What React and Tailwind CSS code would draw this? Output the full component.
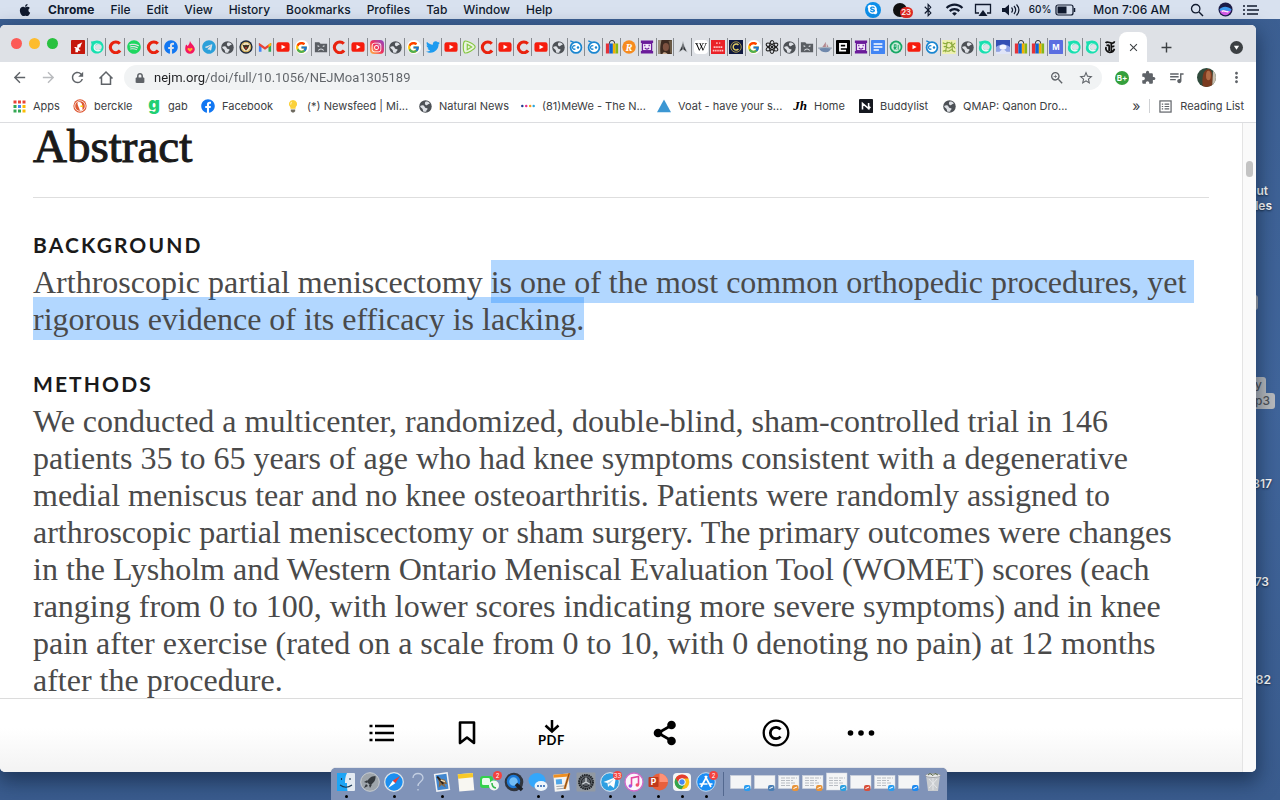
import React from 'react';
import {
  FaApple, FaSkype, FaBluetoothB, FaSpotify, FaFacebook, FaTelegram, FaInstagram,
  FaTwitter, FaWikipediaW, FaLock,
} from 'react-icons/fa';
import { FcGoogle } from 'react-icons/fc';
import {
  MdArrowBack, MdArrowForward, MdRefresh, MdExtension, MdQueueMusic, MdMoreVert,
  MdStarBorder, MdZoomIn, MdWifi, MdClose, MdAdd,
} from 'react-icons/md';

/* ---------- favicons ---------- */

const Svg = ({ children, box = 16, className = 'size-[14px]' }) => (
  <svg viewBox={`0 0 ${box} ${box}`} className={className} aria-hidden="true">{children}</svg>
);

const Globe = () => (
  <Svg className="size-[13px]">
    <circle cx="8" cy="8" r="7.700" fill="#4d5156" />
    <path d="M1.500 7.500C4 5.500 6.500 6.500 7 8.500c.4 1.500 3 .8 3.500 2 .5 1.400-1.500 1.500-1.500 3.500-1.500.7-3 .5-4-.3C5 12 4.500 11 3.500 10.200c-1-.8-2-1.200-2-2.700z" fill="#dee1e6" />
    <path d="M8 2c1.500-.6 4 .2 5.300 2-.6 1-2 .8-2.500 1.600C10.300 6.500 9 6.600 8.200 6 7 5.200 7 3 8 2z" fill="#dee1e6" />
  </Svg>
);
const RedC = () => (
  <Svg><path d="M13.600 3.400A7 7 0 1 0 14 12.200" transform="translate(1.500 1.300) scale(.88)" fill="none" stroke="#e8230f" strokeWidth="4" /></Svg>
);
const YouTube = () => (
  <Svg>
    <rect x="0.500" y="2.500" width="15" height="11" rx="2.500" fill="#f61c0d" />
    <path d="M6.300 5.300v5.400L11 8z" fill="#fff" />
  </Svg>
);
const Google = () => (
  <span className="flex size-[14px] items-center justify-center rounded-full bg-white">
    <FcGoogle className="size-[13px]" />
  </span>
);
const Teal = () => (
  <Svg>
    <path d="M1 1.500c2 .8 4-.8 7-.8 4.500 0 7.500 3.200 7.500 7.300 0 4.500-3.500 7.500-7.500 7.500C4 15.500 1 12.800 1 9.300 1 7 2 6 1.700 4.500z" fill="#18e0b0" />
    <path d="M13 4.500C9.500 2.500 5.500 4.500 5.500 8c0 3 3.500 4.800 7.500 2.500-.8 2-3 3-5 2.500C5 12.500 3.800 10 4 8c.3-4 5-6 9-3.500z" fill="#eafaf6" />
    <path d="M6.500 5.500c3-2 7-.5 7 2.500s-3 4-6 3C5 10 5 7 6.500 5.500z" fill="#dee1e6" />
  </Svg>
);
const SadFolder = () => (
  <Svg>
    <path d="M1 2.500h5l1.500 1.700H15V14H1z" fill="#5a5e63" />
    <path d="M4 6.500l2 1M12 6.500l-2 1M5 12c1.500-2.400 4.500-2.400 6 0" fill="none" stroke="#dee1e6" strokeWidth="1.200" />
  </Svg>
);
const Bag = () => (
  <Svg>
    <path d="M5 5V3.500a3 3 0 0 1 6 0V5" fill="none" stroke="#333" strokeWidth="1.100" />
    <path d="M1 4h4v11.500H1z" fill="#e53238" />
    <path d="M5 4h4v11.500H5z" fill="#0f64d2" />
    <path d="M9 4h3v11.500H9z" fill="#f5af02" />
    <path d="M12 4h3v11.500h-3z" fill="#86b817" />
  </Svg>
);
const Purple = () => (
  <Svg>
    <path d="M1 .5h14v3h-1v9h1v3H1v-3h1v-9H1z" fill="#6a1b9a" />
    <rect x="3.500" y="4.500" width="9" height="7" fill="#f3e8fa" />
    <path d="M5.500 5.500v1.700M10.500 5.500v1.700M5.500 9c1.500 1.800 3.500 1.800 5 0" fill="none" stroke="#6a1b9a" strokeWidth="1.300" />
  </Svg>
);
const BlueRing = () => (
  <Svg>
    <circle cx="8" cy="8.500" r="6.200" fill="#fff" stroke="#1a86d0" strokeWidth="2" />
    <path d="M1.500 1l4.500 2M7.300 7a2 2 0 1 0 0 3" fill="none" stroke="#1a86d0" strokeWidth="1.500" />
    <circle cx="10.300" cy="8.500" r="1.400" fill="#1a86d0" />
  </Svg>
);
const Flipboard = () => (
  <Svg>
    <rect width="16" height="16" rx="1" fill="#c5170c" />
    <path d="M5 14V9h2l.3-3.500L13 2.500l-1.500 3-1 3H9v2l2 1-1 .8H8V14z" fill="#fff" />
    <path d="M4 8.500h2.500" stroke="#fff" strokeWidth="1.200" />
  </Svg>
);
const Flame = () => (
  <Svg>
    <path d="M8 .5C8 4 13.500 6 13.500 10.500A5.400 5.400 0 0 1 8 15.700a5.400 5.400 0 0 1-5.500-5.200C2.500 8 3 6.500 3.500 5c1 .5 1.500 1.200 1.800 2C7 5 8 3 8 .5z" fill="#f5175f" />
    <path d="M8 13.500l-2.800-2.700C4.500 9 7 8.300 8 10c1-1.700 3.500-1 2.800.8z" fill="#ffb02e" />
  </Svg>
);
const Seal = () => (
  <Svg>
    <circle cx="8" cy="8" r="7.600" fill="#1f2a3c" />
    <circle cx="8" cy="8" r="5.400" fill="#f0e3c0" stroke="#d8b35a" strokeWidth="1.200" />
    <path d="M4 5.500l3 .5 1-1 1 1 3-.5L10.500 9 8 12 5.500 9z" fill="#3a2d1c" />
    <path d="M7.200 8h1.600v2H7.200z" fill="#c33" />
  </Svg>
);
const Gmail = () => (
  <Svg>
    <path d="M1 3.500v10h3V7z" fill="#4285f4" />
    <path d="M15 3.500v10h-3V7z" fill="#34a853" />
    <path d="M1 3.200L4 5l4 3 4-3 3-1.800v3L8 11 1 6.200z" fill="#ea4335" />
    <path d="M12 5l3-2v3.200l-3 2z" fill="#fbbc04" />
  </Svg>
);
const Rumble = () => (
  <Svg>
    <path d="M3 1.500c2-1.500 12 4 12 6.500S5 16 3 14.500 1 3 3 1.500z" fill="#eaf4df" stroke="#85c742" strokeWidth="1.300" />
    <path d="M6 5v6l5-3z" fill="none" stroke="#85c742" strokeWidth="1.300" />
  </Svg>
);
const Letter = ({ bg, fg, shape = 'square', ch, font = 'Liberation Serif', size = 12, italic }) => (
  <Svg>
    {shape === 'circle' ? <circle cx="8" cy="8" r="7.700" fill={bg} /> : <rect width="16" height="16" rx="1" fill={bg} />}
    <text x="8" y={8 + size * 0.34} textAnchor="middle" fontFamily={font} fontWeight="700" fontStyle={italic ? 'italic' : 'normal'} fontSize={size} fill={fg}>{ch}</text>
  </Svg>
);
const SquareE = () => (
  <Svg>
    <rect width="16" height="16" rx="1" fill="#000" />
    <path d="M5 8.500h6.500V4.500h-7v7.500h7" fill="none" stroke="#fff" strokeWidth="2" />
  </Svg>
);
const Photo = () => (
  <Svg>
    <rect width="16" height="16" fill="#3d2a20" />
    <path d="M0 0h4c-1 5-2 9-1 16H0z" fill="#9a8f7c" />
    <ellipse cx="9" cy="8" rx="3.500" ry="4.500" fill="#7d5240" />
    <path d="M5 16c1-3 4-2 6 0z" fill="#c9a98f" />
    <path d="M12 1c2 4 1 9 2 14l2 1V0z" fill="#6b5a45" />
  </Svg>
);
const Arrowhead = () => (
  <Svg><path d="M8 1l1.200 5L13 14 8 11 3 14l3.800-8zM8 6v8" fill="#35383c" stroke="#dee1e6" strokeWidth=".7" /></Svg>
);
const PowersBook = () => (
  <Svg>
    <rect width="16" height="16" fill="#ea2127" />
    <path d="M6 3.500h1.500M9.500 3.500h1M3 8h10M2 12h12" stroke="#ffc9c9" strokeWidth="2" strokeDasharray="1.500 .6" fill="none" />
  </Svg>
);
const CoinC = () => (
  <Svg>
    <rect width="16" height="16" fill="#10193f" />
    <circle cx="8" cy="8" r="6" fill="none" stroke="#c9b44f" strokeWidth=".9" />
    <path d="M10.800 5.800a3.400 3.400 0 1 0 0 4.400" fill="none" stroke="#e0cc62" strokeWidth="1.600" />
  </Svg>
);
const Atom = () => (
  <Svg>
    <g fill="none" stroke="#222" strokeWidth="1.200">
      <ellipse cx="8" cy="8" rx="2.700" ry="7.400" />
      <ellipse cx="8" cy="8" rx="2.700" ry="7.400" transform="rotate(60 8 8)" />
      <ellipse cx="8" cy="8" rx="2.700" ry="7.400" transform="rotate(120 8 8)" />
    </g>
    <circle cx="8" cy="8" r="1.500" fill="#222" />
  </Svg>
);
const Boat = () => (
  <Svg>
    <path d="M1 9h14c-1 3-3 5-6 5-4 0-7-2-8-5z" fill="#6f88ac" />
    <path d="M0 9.500c4-1.500 12-1.500 16 0" fill="none" stroke="#a9b2be" strokeWidth="1.500" />
    <path d="M9 2v6H5zM10 4l2 4h-2z" fill="#b58a90" />
  </Svg>
);
const Docs = () => (
  <Svg>
    <rect width="16" height="16" rx="1" fill="#4285f4" />
    <path d="M3 4.500h10M3 8h10M3 11.500h6" stroke="#fff" strokeWidth="1.600" />
  </Svg>
);
const GreenSeal = () => (
  <Svg>
    <circle cx="8" cy="8" r="7.300" fill="#19a766" />
    <circle cx="8" cy="8" r="5" fill="#dff3e8" stroke="#8ed7b3" strokeWidth="1" />
    <path d="M6 11V5.500h2v3H6l2.500 2.500M10.500 5.500V11" fill="none" stroke="#19a766" strokeWidth="1.200" />
  </Svg>
);
const Pattern = () => (
  <Svg>
    <rect width="16" height="16" fill="#eef0b2" />
    <path d="M1 3c4 4 6-3 9 1s4-1 5 0M2 8c3-3 5 4 8 0s4 2 5 1M1 13c4-3 5 2 8-1s4 3 6 1M6 2l-2 12M11 2l1 11" fill="none" stroke="#8cab3c" strokeWidth="1.300" />
  </Svg>
);
const Sky = () => (
  <Svg>
    <rect width="16" height="16" fill="#3450b4" />
    <path d="M0 8c3-4 13-4 16 0v5H0z" fill="#8fa2e6" />
    <ellipse cx="8" cy="8" rx="4" ry="3" fill="#f4f6ff" />
    <path d="M0 13h4l4-3 4 3h4v3H0z" fill="#dfe4f7" />
  </Svg>
);

const tabsA = [
  ['Flipboard', <Flipboard />], ['Tab', <Teal />], ['Tab', <RedC />],
  ['Spotify', <FaSpotify className="size-[14px] text-[#1ed760]" />], ['Tab', <RedC />],
  ['Facebook', <FaFacebook className="size-[14px] text-[#1277f2]" />], ['Flame', <Flame />],
  ['Telegram', <FaTelegram className="size-[14px] text-[#2ba0da]" />], ['Site', <Globe />],
  ['Seal', <Seal />], ['Gmail', <Gmail />], ['YouTube', <YouTube />], ['Google', <Google />],
  ['Unavailable', <SadFolder />], ['Tab', <RedC />], ['YouTube', <YouTube />],
  ['Instagram', (
    <span className="flex size-[14px] items-center justify-center rounded bg-linear-to-tr from-[#fdb83c] via-[#ee2a5b] to-[#8a3ac8]">
      <FaInstagram className="size-[11px] text-white" />
    </span>
  )],
  ['Site', <Globe />], ['Google', <Google />],
  ['Twitter', <FaTwitter className="size-[14px] text-[#1d9bf0]" />], ['YouTube', <YouTube />],
];

const tabsB = [
  ['Rumble', <Rumble />], ['Tab', <RedC />], ['YouTube', <YouTube />], ['Tab', <RedC />],
  ['YouTube', <YouTube />], ['Site', <Globe />], ['Tab', <BlueRing />], ['Tab', <BlueRing />],
  ['Shopping', <Bag />], ['Tab', <Letter bg="#f68b1f" fg="#fff" shape="circle" ch="R" italic />],
  ['Tab', <Purple />], ['Photo', <Photo />], ['Tab', <Arrowhead />],
  ['Wikipedia', <span className="flex size-[14px] items-center justify-center rounded-sm bg-white"><FaWikipediaW className="size-[12px] text-black" /></span>],
  ['Book', <PowersBook />], ['Tab', <CoinC />], ['Google', <Google />],
  ['Science', <Atom />], ['Site', <Globe />],
  ['Unavailable', <SadFolder />], ['Boat', <Boat />],
  ['Tab', <SquareE />], ['Tab', <Purple />],
  ['Docs', <Docs />], ['Tab', <GreenSeal />], ['YouTube', <YouTube />], ['Tab', <BlueRing />],
  ['Tab', <Pattern />], ['Site', <Globe />], ['Tab', <Teal />], ['Sky', <Sky />],
  ['Shopping', <Bag />], ['Shopping', <Bag />],
  ['Tab', <Letter bg="#5b6ee1" fg="#fff" ch="M" font="Inter" size={9} />],
  ['Tab', <Teal />], ['Tab', <Teal />],
  ['Times', (
    <Svg>
      <path d="M3 3.500C4.500 1 7 3 9.500 3.500S13 3 13 1.500M4 6.500c1.500-1 3-.5 3 0v6M9.500 3.500V13M13 7c-1.500 0-3 1-3.500 1M3.500 8c-1 3 1 6 4 6 2.500 0 5-1.500 5.500-4" fill="none" stroke="#111" strokeWidth="2" />
    </Svg>
  )],
];

const TabGroup = ({ tabs, last, className }) => (
  <div className={`flex ${className}`}>
    {tabs.map(([label, icon], i) => (
      <button
        key={i}
        type="button"
        aria-label={label}
        className={`flex h-[18px] min-w-0 flex-1 items-center justify-center border-r ${last && i === tabs.length - 1 ? 'border-transparent' : 'border-[#888c91]'}`}
      >
        <span className="flex shrink-0 justify-center">{icon}</span>
      </button>
    ))}
  </div>
);

/* ---------- system menu bar ---------- */

const menus = ['File', 'Edit', 'View', 'History', 'Bookmarks', 'Profiles', 'Tab', 'Window', 'Help'];

const MenuBar = () => (
  <header className="flex h-[19px] shrink-0 items-center justify-between bg-[#d8e1ef] pl-[18px] pr-[21px] text-[12px] leading-[19px] font-medium text-[#101a2e]">
    <nav className="flex items-center gap-4">
      <button type="button" aria-label="Apple menu"><FaApple className="size-[14px]" /></button>
      <button type="button" className="font-bold">Chrome</button>
      {menus.map((m) => <button key={m} type="button">{m}</button>)}
    </nav>
    <div className="flex items-center">
      <span className="flex size-4 items-center justify-center rounded-full bg-[#0d8fe9] text-white"><FaSkype className="size-[11px]" /></span>
      <span className="relative ml-3 flex h-4 w-[20px]">
        <span className="mt-px size-[14px] rounded-full bg-[#111]" />
        <span className="absolute right-0 bottom-0 flex h-[11px] w-[13px] items-center justify-center rounded-full bg-[#e02a25] text-[8px] leading-none text-white">23</span>
      </span>
      <FaBluetoothB className="ml-[8px] size-[14px]" />
      <MdWifi className="ml-[10px] size-[19px]" />
      <svg viewBox="0 0 18 14" className="ml-[10px] h-[14px] w-[18px]" aria-hidden="true">
        <path d="M5 10H1.500V1.500h15V10H13" fill="none" stroke="#101a2e" strokeWidth="1.300" />
        <path d="M9 7l4.500 6h-9z" fill="#101a2e" />
      </svg>
      <svg viewBox="0 0 20 14" className="ml-[9px] h-[14px] w-[20px]" aria-hidden="true">
        <path d="M1 5h3l4-3.500v11L4 9H1z" fill="#101a2e" />
        <path d="M10.500 4.500c1.300 1.500 1.300 3.500 0 5M13 3c2 2.400 2 5.600 0 8M15.500 1.500c3 3.400 3 7.600 0 11" fill="none" stroke="#101a2e" strokeWidth="1.200" />
      </svg>
      <span className="ml-2 text-[10px]">60%</span>
      <svg viewBox="0 0 21 12" className="ml-1 h-[12px] w-[21px]" aria-hidden="true">
        <rect x="1" y="1" width="17" height="10" rx="2" fill="none" stroke="#101a2e" strokeWidth="1.200" />
        <rect x="2.500" y="2.500" width="9" height="7" fill="#101a2e" />
        <path d="M19.500 4v4" stroke="#101a2e" strokeWidth="1.500" />
      </svg>
      <span className="ml-[17px]">Mon 7:06 AM</span>
      <svg viewBox="0 0 14 14" className="ml-[20px] size-[14px]" aria-hidden="true">
        <circle cx="5.700" cy="5.700" r="4.200" fill="none" stroke="#101a2e" strokeWidth="1.300" />
        <path d="M9 9l4 4" stroke="#101a2e" strokeWidth="1.500" />
      </svg>
      <svg viewBox="0 0 16 16" className="ml-[14px] size-[15px]" aria-hidden="true">
        <circle cx="8" cy="8" r="7.500" fill="#1b1c48" />
        <path d="M1.500 8c3-4 9-4 13 0-2 5-10 7-13 0z" fill="#3d9bf0" />
        <path d="M2 10c4-3 8 1 12-1-2 6-9 7-12 1z" fill="#d45be8" />
        <path d="M4 10c3-2 6 2 7 0" stroke="#fff" strokeWidth="1.300" fill="none" />
      </svg>
      <svg viewBox="0 0 16 12" className="ml-[10px] h-[12px] w-[16px]" aria-hidden="true">
        <path d="M0 2h2M0 6h2M0 10h2M4 2h10M4 6h12M4 10h11" stroke="#101a2e" strokeWidth="1.600" />
      </svg>
    </div>
  </header>
);

/* ---------- browser chrome ---------- */

const TabStrip = () => (
  <div className="flex h-[37px] shrink-0 bg-[#dee1e6]">
    <div className="flex w-[69px] shrink-0 gap-[7px] pt-[13px] pl-[11px]">
      <button type="button" aria-label="Close window" className="size-[11px] rounded-full bg-[#fc5b57]" />
      <button type="button" aria-label="Minimize window" className="size-[11px] rounded-full bg-[#fdbc2e]" />
      <button type="button" aria-label="Zoom window" className="size-[11px] rounded-full bg-[#28c13f]" />
    </div>
    <div className="flex min-w-0 flex-1 pt-[13px]">
      <TabGroup tabs={tabsA} className="w-[392px] shrink" />
      <TabGroup tabs={tabsB} last className="min-w-0 flex-1" />
    </div>
    <div className="mt-[7px] flex w-[28px] shrink-0 items-center justify-center rounded-t-lg bg-white">
      <button type="button" aria-label="Close tab"><MdClose className="size-[13px] text-[#3c4043]" /></button>
    </div>
    <div className="flex w-[109px] shrink-0 items-center justify-between pt-[7px] pr-[13px] pl-[11px]">
      <button type="button" aria-label="New tab"><MdAdd className="size-[17px] text-[#3c4043]" /></button>
      <button type="button" aria-label="Search tabs" className="flex size-[13px] items-center justify-center rounded-full bg-[#3c4043]">
        <svg viewBox="0 0 8 8" className="size-[7px]" aria-hidden="true"><path d="M1 2h6L4 6.500z" fill="#fff" /></svg>
      </button>
    </div>
  </div>
);

const Toolbar = () => (
  <div className="flex h-[31px] shrink-0 items-center pr-[11px] pl-[11px] text-[#5f6368]">
    <div className="flex shrink-0 gap-[12px]">
      <button type="button" aria-label="Back"><MdArrowBack className="size-[17px]" /></button>
      <button type="button" aria-label="Forward"><MdArrowForward className="size-[17px] text-[#b9bbbe]" /></button>
      <button type="button" aria-label="Reload"><MdRefresh className="size-[17px]" /></button>
      <button type="button" aria-label="Home">
        <svg viewBox="0 0 16 16" className="size-[16px]" aria-hidden="true">
          <path d="M1.500 8.500L8 2l6.500 6.500M3.500 7v7.300h9V7" fill="none" stroke="#5f6368" strokeWidth="1.500" />
        </svg>
      </button>
    </div>
    <div className="ml-[10px] flex h-[25px] min-w-0 flex-1 items-center rounded-full bg-[#f1f3f4] pr-[8px] pl-[11px]">
      <FaLock className="size-[10px] shrink-0" />
      <input
        aria-label="Address"
        defaultValue="nejm.org/doi/full/10.1056/NEJMoa1305189"
        className="ml-[9px] min-w-0 flex-1 bg-linear-to-r from-[#202124] from-[51px] to-[#5f6368] to-[51px] bg-clip-text font-['Roboto',sans-serif] text-[13px] text-transparent outline-none"
      />
      <button type="button" aria-label="Zoom"><MdZoomIn className="size-[16px]" /></button>
      <button type="button" aria-label="Bookmark this page" className="ml-[13px]"><MdStarBorder className="size-[16px]" /></button>
    </div>
    <div className="ml-[13px] flex shrink-0 items-center gap-[12px]">
      <button type="button" aria-label="B plus extension" className="flex size-[14px] items-center justify-center rounded-full bg-[#35a03c] text-[8px] leading-none font-bold text-white">B+</button>
      <button type="button" aria-label="Extensions"><MdExtension className="size-[15px]" /></button>
      <button type="button" aria-label="Media"><MdQueueMusic className="size-[17px]" /></button>
      <button type="button" aria-label="Profile" className="size-[19px] overflow-hidden rounded-full">
        <svg viewBox="0 0 20 20" aria-hidden="true">
          <rect width="20" height="20" fill="#2f4a3c" />
          <path d="M6 20C5 10 6 2 12 1c5 1 5 10 4 19z" fill="#7a3a1f" />
          <ellipse cx="12" cy="8" rx="2.500" ry="5" fill="#b06a45" />
          <path d="M17 0h3v20h-4z" fill="#c9c0b0" />
        </svg>
      </button>
      <button type="button" aria-label="Menu"><MdMoreVert className="size-[17px]" /></button>
    </div>
  </div>
);

const AppsGrid = () => (
  <Svg box={13} className="size-[13px]">
    {['#ea4335', '#ea4335', '#ea4335', '#34a853', '#4285f4', '#fbbc04', '#34a853', '#34a853', '#fbbc04'].map((c, i) => (
      <rect key={i} x={0.5 + (i % 3) * 4.5} y={0.5 + Math.floor(i / 3) * 4.5} width="3" height="3" fill={c} />
    ))}
  </Svg>
);
const Duck = () => (
  <Svg>
    <circle cx="8" cy="8" r="7.600" fill="#de5833" />
    <circle cx="8" cy="8" r="6" fill="none" stroke="#fff" strokeWidth=".9" />
    <path d="M5 4c3-1.500 5.500 .5 5.500 3.500l.5 5.500-3 .5C7 10 5 7 5 4z" fill="#fff" />
    <path d="M8.500 7.500h3.500l-1 1.500H8.500z" fill="#fdd20a" />
  </Svg>
);
const Bulb = () => (
  <Svg>
    <path d="M8 1a4.800 4.800 0 0 1 3 8.500V11H5V9.500A4.800 4.800 0 0 1 8 1z" fill="#fbd13a" />
    <path d="M6.500 3.500c-1 .8-1.200 2-1 3" stroke="#fff3b8" strokeWidth="1.200" fill="none" />
    <path d="M5.500 12h5v2l-1.500 1.500H7L5.500 14z" fill="#6e6a60" />
  </Svg>
);
const Dots4 = () => (
  <Svg>
    <circle cx="1.500" cy="8" r="1.400" fill="#1f3b8f" /><circle cx="6" cy="8" r="1.400" fill="#e5308a" />
    <circle cx="10.500" cy="8" r="1.400" fill="#f59b1c" /><circle cx="14.500" cy="8" r="1.400" fill="#2aa7dc" />
  </Svg>
);
const Buddy = () => (
  <Svg>
    <rect width="16" height="16" rx="1" fill="#15181f" />
    <path d="M4 12V5l7 6V4.500M11 5.500V12M11 11l2-2" fill="none" stroke="#fff" strokeWidth="1.800" />
  </Svg>
);

const bookmarks = [
  ['Apps', <AppsGrid />, 'w-[61px]'],
  ['berckle', <Duck />, 'w-[74px]'],
  ['gab', <span className="-mt-1 text-[18px] leading-[14px] font-black text-[#21cf73]">g</span>, 'w-[54px]'],
  ['Facebook', <FaFacebook className="size-[14px] text-[#1277f2]" />, 'w-[85px]'],
  ['(*) Newsfeed | Mi...', <Bulb />, 'w-[132px]'],
  ['Natural News', <Globe />, 'w-[103px]'],
  ['(81)MeWe - The N...', <Dots4 />, 'w-[136px]'],
  ['Voat - have your s...', <Svg><path d="M8 0.500L16 15H0z" fill="#3c97d3" /></Svg>, 'w-[136px]'],
  ['Home', <span className="font-['Liberation_Serif',serif] text-[13px] leading-[14px] font-bold text-black italic">Jh</span>, 'w-[66px]'],
  ['Buddylist', <Buddy />, 'w-[83px]'],
  ['QMAP: Qanon Dro...', <Globe />, 'w-[122px]'],
];

const BookmarkBar = () => (
  <nav className="flex h-[30px] shrink-0 items-center border-b border-[#dcdde0] pb-[3px] pl-[12px] text-[11px] text-[#3c4043]">
    {bookmarks.map(([label, icon, w]) => (
      <a key={label} href="#" className={`flex shrink-0 items-center gap-[7px] whitespace-nowrap ${w}`}>
        <span className="flex w-[14px] shrink-0 justify-center">{icon}</span>
        {label}
      </a>
    ))}
    <div className="ml-auto flex shrink-0 items-center pr-[12px]">
      <button type="button" aria-label="More bookmarks" className="text-[14px] leading-[14px]">»</button>
      <span className="ml-[9px] h-[14px] w-px bg-[#cfd1d4]" />
      <button type="button" className="ml-[9px] flex items-center gap-[8px] whitespace-nowrap">
        <svg viewBox="0 0 14 14" className="size-[13px]" aria-hidden="true">
          <rect x="1" y="1" width="12" height="12" fill="none" stroke="#5f6368" strokeWidth="1.300" />
          <path d="M3 4.500h1.500M3 7h1.500M3 9.500h1.500M6 4.500h5M6 7h5M6 9.500h5" stroke="#5f6368" strokeWidth="1.200" />
        </svg>
        Reading List
      </button>
    </div>
  </nav>
);

/* ---------- article ---------- */

const methods = [
  'We conducted a multicenter, randomized, double-blind, sham-controlled trial in 146',
  'patients 35 to 65 years of age who had knee symptoms consistent with a degenerative',
  'medial meniscus tear and no knee osteoarthritis. Patients were randomly assigned to',
  'arthroscopic partial meniscectomy or sham surgery. The primary outcomes were changes',
  'in the Lysholm and Western Ontario Meniscal Evaluation Tool (WOMET) scores (each',
  'ranging from 0 to 100, with lower scores indicating more severe symptoms) and in knee',
  'pain after exercise (rated on a scale from 0 to 10, with 0 denoting no pain) at 12 months',
  'after the procedure.',
];

const SectionTitle = ({ children }) => (
  <h3 className="mb-[6px] font-['Lato',sans-serif] text-[21px] leading-[27px] font-bold tracking-widest text-[#1a1a1a]">{children}</h3>
);

const Mark = ({ children }) => <mark className="bg-[#007aff]/30 pt-[4px] pb-[3px] text-inherit">{children}</mark>;

const Article = () => (
  <main className="min-h-0 flex-1 px-[33px] font-['Liberation_Serif',serif] text-[#4a4a4a]">
    <h2 className="border-b border-[#dedede] pb-[28px] text-[47px] leading-[46px] text-[#1a1a1a] [-webkit-text-stroke:1px_#1a1a1a]">Abstract</h2>
    <section className="mt-[33px]">
      <SectionTitle>BACKGROUND</SectionTitle>
      <p className="text-[32px] leading-[37px] whitespace-nowrap">
        Arthroscopic partial meniscectomy <Mark>is one of the most common orthopedic procedures, yet&nbsp;</Mark><br />
        <Mark>rigorous evidence of its efficacy is lacking.</Mark>
      </p>
    </section>
    <section className="mt-8">
      <SectionTitle>METHODS</SectionTitle>
      <p className="text-[32px] leading-[37px] whitespace-nowrap">
        {methods.map((line) => <React.Fragment key={line}>{line}<br /></React.Fragment>)}
      </p>
    </section>
  </main>
);

const ArticleTools = () => (
  <footer className="relative flex h-[74px] shrink-0 justify-center gap-[57px] border-t border-[#dcdcdc] bg-linear-to-b from-white from-40% to-[#f3f3f3] pt-[20px] text-black">
    <button type="button" aria-label="Contents" className="size-7">
      <svg viewBox="0 0 28 28" aria-hidden="true"><path d="M1.500 7h3M1.500 14h3M1.500 21h3M7 7h19M7 14h19M7 21h19" stroke="#000" strokeWidth="2.600" /></svg>
    </button>
    <button type="button" aria-label="Save" className="size-7">
      <svg viewBox="0 0 28 28" aria-hidden="true"><path d="M7 3.500h14v20.500l-7-5.500-7 5.500z" fill="none" stroke="#000" strokeWidth="2.600" strokeLinejoin="round" /></svg>
    </button>
    <button type="button" className="flex h-7 w-7 flex-col items-center">
      <svg viewBox="0 0 16 15" className="h-[15px] w-[16px] shrink-0" aria-hidden="true"><path d="M8 1v11M1.500 6.500L8 12.500l6.500-6" fill="none" stroke="#000" strokeWidth="2.500" /></svg>
      <span className="font-['Lato',sans-serif] text-[13px] leading-[13px] font-bold tracking-wider">PDF</span>
    </button>
    <button type="button" aria-label="Share" className="mr-[26px] ml-7 size-7">
      <svg viewBox="0 0 28 28" aria-hidden="true">
        <path d="M21 6L7 14l14 8" fill="none" stroke="#000" strokeWidth="2.600" />
        <circle cx="20.500" cy="6" r="4.300" /><circle cx="7" cy="14" r="4.300" /><circle cx="20.500" cy="22" r="4.300" />
      </svg>
    </button>
    <button type="button" aria-label="Permissions" className="size-7">
      <svg viewBox="0 0 28 28" aria-hidden="true">
        <circle cx="14" cy="14" r="12.300" fill="none" stroke="#000" strokeWidth="2.300" />
        <path d="M18.500 10.500a5.700 5.700 0 1 0 0 7" fill="none" stroke="#000" strokeWidth="2.800" />
      </svg>
    </button>
    <button type="button" aria-label="More" className="size-7">
      <svg viewBox="0 0 28 28" aria-hidden="true"><circle cx="3.500" cy="14" r="2.800" /><circle cx="14" cy="14" r="2.800" /><circle cx="24.500" cy="14" r="2.800" /></svg>
    </button>
  </footer>
);

/* ---------- dock ---------- */

const D = ({ children }) => <svg viewBox="0 0 20 20" className="size-[20px]" aria-hidden="true">{children}</svg>;

const dockApps = [
  ['Finder', <D><rect x="1" y="1" width="18" height="18" rx="1" fill="#e3eaf2" /><path d="M1 1h10C9 5 9 8 9 11h2c0 3 0 5 .5 8H1z" fill="#1ea4f4" /><path d="M5.500 6v2M14 6v2M4 13c4 3 8 3 12 0" stroke="#1c3954" strokeWidth="1.100" fill="none" /></D>, true],
  ['Launchpad', <D><circle cx="10" cy="10" r="9.300" fill="#9ea5ab" stroke="#c8cdd1" /><path d="M15.500 4c-5 0-7 3-8.500 6l3 3c3-1.500 6-4 5.500-9zM7.500 8L4 10l3 1zM12 12.500L10 16l-1-3zM6 12l-2 4 4-2z" fill="#34393e" /></D>],
  ['Safari', <D><circle cx="10" cy="10" r="9.300" fill="#1c8ff0" stroke="#dde3e8" strokeWidth="1.300" /><path d="M16 4l-4.700 7.300L8.700 8.700z" fill="#f33b30" /><path d="M4 16l4.700-7.300 2.600 2.600z" fill="#fff" /></D>, true],
  ['Unknown', <D><path d="M5 6c0-6 10-6 10 0 0 4-5 3.500-5 8M10 17v1.500" fill="none" stroke="#c3cfe2" strokeWidth="1.300" /></D>],
  ['Mail', <D><g transform="rotate(-8 10 10)"><rect x="3" y="1" width="14" height="18" fill="#f2f3f5" /><rect x="4.500" y="2.500" width="11" height="15" fill="#4187d0" /><path d="M6 4l4 3 3 1 2 5-3-1 1 4-4-3-3 2 1-5z" fill="#8a6a45" /><path d="M6 4l5 8" stroke="#2a211c" strokeWidth="1.800" /><path d="M9 8l4 2" stroke="#f0d9b0" strokeWidth="1.200" /></g></D>, true],
  ['Notes', <D><g transform="rotate(-5 10 10)"><rect x="2.500" y="1.500" width="15" height="17.500" fill="#f8f7f2" /><rect x="2.500" y="1.500" width="15" height="4.500" fill="#f9c927" /></g></D>],
  ['FaceTime', <D><rect x="0" y="4" width="13" height="12" rx="3" fill="#33d14c" /><path d="M13 9l3-2v6z" fill="#33d14c" /><rect x="2" y="6" width="8" height="7" rx="1.500" fill="#e9fbec" /><circle cx="14" cy="13.500" r="5" fill="#f1f6f2" /><path d="M12 11c0 3 1 4.500 4 5" stroke="#33b94a" strokeWidth="1.600" fill="none" /></D>, false, '2'],
  ['QuickTime', <D><circle cx="10" cy="10" r="9.300" fill="#30353e" /><circle cx="9.500" cy="9.500" r="5.500" fill="#72bdf5" stroke="#1b78d6" strokeWidth="2.500" /><path d="M12 12l6 6" stroke="#1d2128" strokeWidth="3.500" /></D>],
  ['Messages', <D><ellipse cx="9" cy="8.500" rx="8.500" ry="7.500" fill="#34a7fb" /><ellipse cx="13" cy="14" rx="6.500" ry="5" fill="#eef5fb" /><circle cx="10" cy="14" r="1" fill="#245fae" /><circle cx="13" cy="14" r="1" fill="#245fae" /><circle cx="16" cy="14" r="1" fill="#245fae" /></D>, true],
  ['Pages', <D><g transform="rotate(-5 10 10)"><rect x="2" y="2" width="15" height="17" fill="#f4f4f2" /><path d="M2 2h15v3H2z" fill="#ee8f21" /><rect x="4" y="7" width="6" height="5" fill="#4fa6e8" /><path d="M4 14h10M4 16.500h8" stroke="#a1a6ab" /><path d="M18 2l-6 15" stroke="#e08a2e" strokeWidth="2.400" /><path d="M18 2l-6 15" stroke="#6b3a14" strokeWidth=".8" /></g></D>, true],
  ['Settings', <D><rect x="0.500" y="0.500" width="19" height="19" rx="1" fill="#9299a2" /><circle cx="10" cy="10" r="7" fill="#5b6067" stroke="#202327" strokeWidth="2" strokeDasharray="1.500 .7" /><circle cx="10" cy="10" r="4.500" fill="none" stroke="#202327" /><path d="M10 10V5.500M10 10l4 2.300M10 10l-4 2.300" stroke="#d0d4d8" strokeWidth="1.300" /></D>],
  ['Telegram', <D><circle cx="10" cy="10" r="9.300" fill="#2f9fe2" stroke="#e3eaf0" /><path d="M3.500 10L16 5l-2 11-4-3-2 2-.5-4z" fill="#fff" /><path d="M7.500 11L14 7l-5 5.500z" fill="#a8cfe8" /></D>, true, '33'],
  ['Music', <D><circle cx="10" cy="10" r="9" fill="#fbf7fb" stroke="#d36ac9" strokeWidth="1.300" /><path d="M7.500 14V6l7-1.500V13" fill="none" stroke="#e445a0" strokeWidth="1.600" /><circle cx="6.300" cy="14" r="1.800" fill="#9c55e4" /><circle cx="13.300" cy="13" r="1.800" fill="#f2546b" /></D>, true],
  ['PowerPoint', <D><circle cx="11.500" cy="10" r="8.500" fill="#e8603c" /><path d="M11.500 1.500a8.500 8.500 0 0 1 8.500 8.500h-8.500z" fill="#ff9175" /><rect x="0.500" y="5" width="10" height="10" rx="1" fill="#c03a1c" /><text x="5.500" y="13" textAnchor="middle" fontFamily="Inter" fontWeight="700" fontSize="8.500" fill="#fff">P</text></D>, true],
  ['Chrome', <D><rect x="1" y="1" width="18" height="18" rx="4" fill="#f4f5f6" /><circle cx="10" cy="10" r="7.300" fill="#fbc116" /><path d="M3.700 6.300A7.300 7.300 0 0 1 16.500 6.500H10L6.500 11.500z" fill="#e53d30" /><path d="M3.700 6.300A7.300 7.300 0 0 0 9.500 17.300L13 12H7z" fill="#32a350" /><circle cx="10" cy="10" r="3.300" fill="#4688f1" stroke="#fff" /></D>, true],
  ['App Store', <D><circle cx="10" cy="10" r="9.300" fill="#1b8ef5" stroke="#c8dcef" /><path d="M11 4L5 15M9 4l6 11M3.500 12h8M13.500 12h3" stroke="#fff" strokeWidth="1.700" fill="none" /></D>, true, '2'],
];

const Thumb = ({ accent, busy, tall }) => (
  <svg viewBox="0 0 22 20" className="h-[20px] w-[22px]" aria-hidden="true">
    <rect x="0.500" y={tall ? 1 : 3.5} width="20.500" height={tall ? 17 : 13} fill="#f4f5f6" stroke="#d3d8df" strokeWidth=".5" />
    {busy && <path d="M3 6h16M3 8.500h12M3 11h15M3 13.500h10" stroke="#b9bdc3" strokeWidth="1" strokeDasharray="4 1" />}
    <rect x="14" y="13" width="6.500" height="6" rx="2" fill={accent} />
    <path d="M15.500 16.500l3.500-1.500" stroke="#fff" strokeWidth="1" />
  </svg>
);

const thumbs = [
  ['#2a9df0'], ['#4a7fb5'], ['#e8943a', true], ['#e8943a', true], ['#2b9fe0', true, true], ['#d8503c'], ['#2a9df0', true], ['#1f8af0'],
];

const Dock = () => (
  <div className="absolute inset-x-0 bottom-0 z-20 flex justify-center pr-[2px]">
    <div className="flex h-[32px] items-start rounded-t-[5px] bg-[#8093b8] pr-[2px] pl-[3px] shadow-[0_0_1px_#4a5c80]">
      {dockApps.map(([label, icon, running, badge]) => (
        <button key={label} type="button" aria-label={label} className="relative flex w-[24px] flex-col items-center pt-[4px]">
          {icon}
          {running && <span className="mt-[3px] size-[3px] rounded-full bg-black" />}
          {badge && <span className="absolute top-[3px] right-0 flex size-[9px] items-center justify-center rounded-full bg-[#f4423e] text-[6px] leading-none text-white">{badge}</span>}
        </button>
      ))}
      <span className="mx-[5px] mt-[4px] h-[24px] w-px bg-[#53688f]" />
      {thumbs.map(([accent, busy, tall], i) => (
        <button key={i} type="button" aria-label={`Minimized window ${i + 1}`} className="flex w-[24px] justify-center pt-[4px]">
          <Thumb accent={accent} busy={busy} tall={tall} />
        </button>
      ))}
      <button type="button" aria-label="Trash" className="flex w-[24px] justify-center pt-[4px]">
        <D><path d="M3 3h14l-2 16H5z" fill="#c9cccf" /><ellipse cx="10" cy="3.500" rx="7.500" ry="2" fill="#e9eaeb" stroke="#8c8f92" strokeWidth=".7" /><path d="M5 3l2-1.500 3 2 2-2 3 1.500" stroke="#5a6a4a" fill="none" /><path d="M6 7l8 9M14 7l-8 9M10 6v12" stroke="#eceeef" strokeWidth=".8" /></D>
      </button>
    </div>
  </div>
);

/* ---------- desktop ---------- */

const labelBase = 'absolute text-[12px] leading-[15px] font-semibold text-white [text-shadow:0_1px_2px_#14263f]';

const DesktopLabels = () => (
  <div>
    <span className={`${labelBase} top-[183px] right-[12px]`}>ut</span>
    <span className={`${labelBase} top-[198px] right-[8px]`}>les</span>
    <span className="absolute top-[295px] right-[22px] h-[15px] w-[6px] rounded-sm bg-[#a9adb3]" />
    <span className="absolute top-[377px] right-[14px] rounded-t-[3px] bg-[#b9bbbe] pr-1 pl-2 text-[12px] leading-[16px] font-medium text-[#4f5358]">y</span>
    <span className="absolute top-[393px] right-[5px] rounded-[3px] bg-[#b9bbbe] pr-[5px] pl-2 text-[12px] leading-[16px] font-medium text-[#4f5358]">p3</span>
    <span className={`${labelBase} top-[476px] right-[8px]`}>817</span>
    <span className={`${labelBase} top-[574px] right-[11px]`}>73</span>
    <span className={`${labelBase} top-[672px] right-[9px]`}>82</span>
  </div>
);

export default function App() {
  return (
    <div className="relative flex h-screen flex-col overflow-hidden bg-linear-to-b from-[#3c5f92] via-[#40659b] to-[#3a5c8e] font-['Inter',sans-serif]">
      <MenuBar />
      <DesktopLabels />
      <div className="relative mt-[6px] mr-[24px] mb-[28px] flex min-h-0 flex-1 flex-col overflow-hidden rounded-[5px] bg-white shadow-[0_8px_20px_2px_rgba(10,25,50,0.55)]">
        <TabStrip />
        <Toolbar />
        <BookmarkBar />
        <div className="flex min-h-0 flex-1">
          <div className="flex min-w-0 flex-1 flex-col">
            <Article />
            <ArticleTools />
          </div>
          <div className="w-[14px] shrink-0 border-l border-[#e4e4e4] bg-[#fafafa] px-[3px] pt-[38px]">
            <div className="h-[16px] w-[7px] rounded-full bg-[#c3c3c3]" />
          </div>
        </div>
      </div>
      <Dock />
    </div>
  );
}
